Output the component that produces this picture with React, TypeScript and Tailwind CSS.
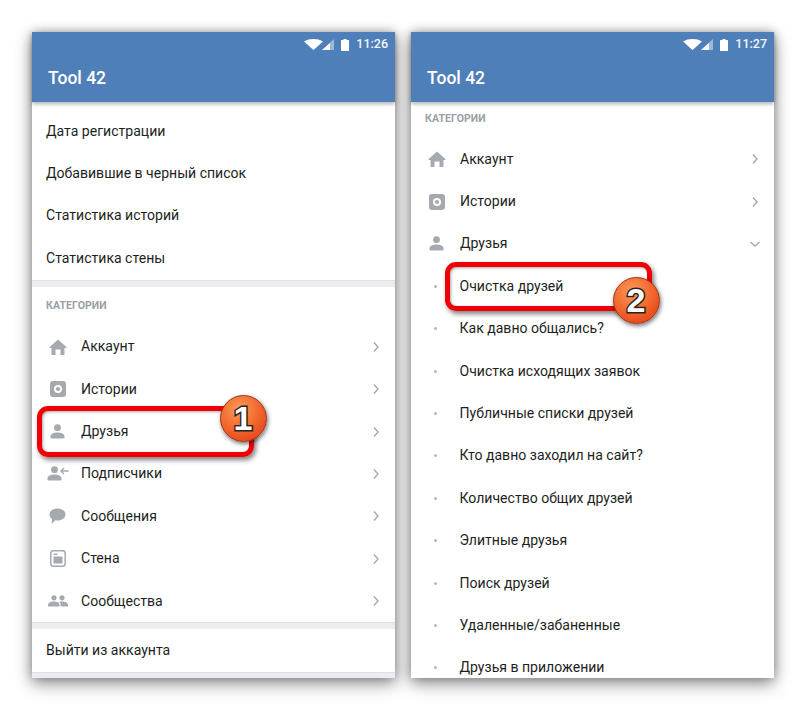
import React from "react";

const G = "#a5a9b0";

const Home = () => (
  <svg width="18" height="16" viewBox="0 0 18 16" fill={G}>
    <path d="M9 0.5 L17.6 8.2 Q18 9 17 9 H15.5 V15 Q15.5 16 14.5 16 H11.5 V10.5 H6.5 V16 H3.5 Q2.5 16 2.5 15 V9 H1 Q0 9 0.4 8.2 Z" />
  </svg>
);
const Stories = () => (
  <svg width="16" height="16" viewBox="0 0 16 16">
    <rect width="16" height="16" rx="3" fill={G} />
    <circle cx="8" cy="8" r="4" fill="#fff" />
    <circle cx="8" cy="8" r="2.1" fill={G} />
  </svg>
);
const Person = () => (
  <svg width="15" height="15" viewBox="0 0 15 15" fill={G}>
    <circle cx="7.5" cy="3.7" r="3.4" />
    <path d="M0.5 12.5 C0.5 9.8 4 8.6 7.5 8.6 C11 8.6 14.5 9.8 14.5 12.5 V13.2 Q14.5 14.5 13 14.5 H2 Q0.5 14.5 0.5 13.2 Z" />
  </svg>
);
const Followers = () => (
  <svg width="22" height="15" viewBox="0 0 22 15" fill={G}>
    <circle cx="7.5" cy="3.7" r="3.4" />
    <path d="M0.5 12.5 C0.5 9.8 4 8.6 7.5 8.6 C11 8.6 14.5 9.8 14.5 12.5 V13.2 Q14.5 14.5 13 14.5 H2 Q0.5 14.5 0.5 13.2 Z" />
    <path d="M17 2 L14 5 L17 8 M14.5 5 H21.5" fill="none" stroke={G} strokeWidth="1.3" />
  </svg>
);
const Bubble = () => (
  <svg width="17" height="16" viewBox="0 0 17 16" fill={G}>
    <path d="M8.5 0.5 C13 0.5 16.5 3 16.5 6.5 C16.5 10 13 12.5 8.5 12.5 C7.8 12.5 7 12.4 6.3 12.3 C5.2 13.6 3.6 15 2.4 15.4 C2.9 14 3.1 12.4 3 11 C1.4 9.9 0.5 8.3 0.5 6.5 C0.5 3 4 0.5 8.5 0.5 Z" />
  </svg>
);
const Wall = () => (
  <svg width="16" height="17" viewBox="0 0 16 17">
    <rect x="0.8" y="0.8" width="14.4" height="15.4" rx="2.6" fill="none" stroke={G} strokeWidth="1.5" />
    <rect x="3.5" y="3.6" width="4" height="1.5" fill={G} />
    <rect x="3.5" y="6.6" width="9" height="7" rx="0.6" fill={G} />
  </svg>
);
const Group = () => (
  <svg width="20" height="12" viewBox="0 0 20 12" fill={G}>
    <circle cx="6" cy="2.8" r="2.6" />
    <circle cx="14" cy="2.8" r="2.6" />
    <path d="M0 10 C0 7.5 3 6.5 6 6.5 C9 6.5 11.5 7.5 11.5 10 V11.5 H0 Z" />
    <path d="M12.6 11.5 V9.5 C12.6 8.4 12 7.5 11 6.9 C12 6.6 13 6.5 14 6.5 C17 6.5 20 7.5 20 10 V11.5 Z" />
  </svg>
);

const Chevron = ({ down }: { down?: boolean }) => (
  <svg width="12" height="12" viewBox="0 0 12 12" fill="none" stroke="#a5a9b0" strokeWidth="1.4">
    {down ? <path d="M1.5 4 L6 8 L10.5 4" /> : <path d="M4 1.5 L8 6 L4 10.5" />}
  </svg>
);

const Status = ({ time }: { time: string }) => (
  <div className="h-[24px] flex items-center justify-end pr-[7px] pt-[1px]">
    <svg width="19" height="11" viewBox="0 0 18 11" fill="#fff" className="mr-[-1px]" preserveAspectRatio="none">
      <path d="M0 2.5 C2.5 0.8 5.5 0 9 0 C12.5 0 15.5 0.8 18 2.5 L9 11 Z" />
    </svg>
    <svg width="12" height="11" viewBox="0 0 12 11" className="mr-[7px]">
      <path d="M12 0 V11 H0 Z" fill="#fff" fillOpacity="0.45" />
      <path d="M8 4 V11 H0.5 L0 11 Z" fill="#fff" fillOpacity="0.9" />
    </svg>
    <svg width="8" height="12" viewBox="0 0 8 12" fill="#fff" className="mr-[7px]">
      <rect x="2.5" y="0" width="3" height="1" />
      <rect x="0" y="1" width="8" height="11" rx="0.5" />
    </svg>
    <span className="text-[12.5px] font-medium text-[#f2f5f9] leading-none">{time}</span>
  </div>
);

const Header = ({ time }: { time: string }) => (
  <div className="relative z-10 h-[70px] shrink-0 bg-[#4f7fb9] shadow-[0_2px_4px_rgba(0,0,0,0.3)]">
    <Status time={time} />
    <div className="pl-[16px] pt-[10px] text-[17.5px] leading-[24px] font-medium text-white">Tool 42</div>
  </div>
);

const Row = ({ children }: { children: React.ReactNode }) => (
  <div className="h-[42.4px] flex items-center pl-[14px] text-[14.05px] text-[#1d1f22]">{children}</div>
);

const CatRow = ({ icon, label, down }: { icon: React.ReactNode; label: string; down?: boolean }) => (
  <div className="h-[42.4px] flex items-center text-[14.05px] text-[#1d1f22]">
    <div className="w-[49px] pl-[2px] flex justify-center shrink-0">{icon}</div>
    <span className="flex-1">{label}</span>
    <div className="pr-[13px] flex">
      <Chevron down={down} />
    </div>
  </div>
);

const SubRow = ({ label }: { label: string }) => (
  <div className="h-[42.4px] flex items-center text-[14.05px] text-[#1d1f22]">
    <div className="w-[48.5px] flex justify-end pr-[23px] shrink-0">
      <span className="w-[3px] h-[3px] rounded-full bg-[#b4b8be]" />
    </div>
    <span>{label}</span>
  </div>
);

const Divider = () => (
  <div className="h-[7px] bg-[#ebedf0] border-t border-[#dfe1e5] shrink-0" />
);

const CatTitle = ({ className }: { className: string }) => (
  <div className={`${className} pl-[14px] text-[10.5px] font-bold leading-[14px] text-[#9a9ea5] tracking-[0.1px]`}>
    КАТЕГОРИИ
  </div>
);

const Phone = ({ children, time }: { children: React.ReactNode; time: string }) => (
  <div className="relative w-[363px] h-[646px] bg-white flex flex-col shadow-[0_6px_16px_rgba(0,0,0,0.4),0_0_10px_rgba(0,0,0,0.28)]">
    <Header time={time} />
    <div className="flex-1 overflow-hidden">{children}</div>
  </div>
);

const Mark = ({ n, boxClass, badgeClass }: { n: string; boxClass: string; badgeClass: string }) => (
  <>
    <div
      className={`absolute z-20 border-[5px] border-[#ee0008] rounded-[11px] shadow-[2px_3px_5px_rgba(0,0,0,0.5),inset_1px_1px_3px_rgba(0,0,0,0.35)] ${boxClass}`}
    />
    <div
      className={`absolute z-30 w-[47px] h-[47px] rounded-full flex items-center justify-center border border-[#9a3312] bg-[radial-gradient(circle_at_40%_30%,#fb9a58_0%,#f2662c_50%,#dc3414_100%)] shadow-[1px_2px_4px_rgba(0,0,0,0.55)] ${badgeClass}`}
    >
      <span className="font-['Liberation_Sans',sans-serif] text-[34px] font-bold leading-none text-white [-webkit-text-stroke:3px_#2b2320] [paint-order:stroke_fill]">
        {n}
      </span>
    </div>
  </>
);

export default function App() {
  return (
    <div className="w-[806px] h-[710px] bg-white pt-[32px] pl-[32px] flex gap-[16px] font-['Roboto',sans-serif] overflow-hidden">
      <Phone time="11:26">
        <div className="pt-[8px]">
          <Row>Дата регистрации</Row>
          <Row>Добавившие в черный список</Row>
          <Row>Статистика историй</Row>
          <Row>Статистика стены</Row>
        </div>
        <Divider />
        <CatTitle className="pt-[12px] pb-[13px]" />
        <CatRow icon={<Home />} label="Аккаунт" />
        <CatRow icon={<Stories />} label="Истории" />
        <CatRow icon={<Person />} label="Друзья" />
        <CatRow icon={<Followers />} label="Подписчики" />
        <CatRow icon={<Bubble />} label="Сообщения" />
        <CatRow icon={<Wall />} label="Стена" />
        <CatRow icon={<Group />} label="Сообщества" />
        <Divider />
        <Row>Выйти из аккаунта</Row>
        <Divider />
        <Mark n="1" boxClass="left-[5px] top-[374px] w-[217px] h-[51px]" badgeClass="left-[187.5px] top-[362.5px]" />
      </Phone>
      <Phone time="11:27">
        <CatTitle className="pt-[10px] pb-[12px]" />
        <CatRow icon={<Home />} label="Аккаунт" />
        <CatRow icon={<Stories />} label="Истории" />
        <CatRow icon={<Person />} label="Друзья" down />
        <SubRow label="Очистка друзей" />
        <SubRow label="Как давно общались?" />
        <SubRow label="Очистка исходящих заявок" />
        <SubRow label="Публичные списки друзей" />
        <SubRow label="Кто давно заходил на сайт?" />
        <SubRow label="Количество общих друзей" />
        <SubRow label="Элитные друзья" />
        <SubRow label="Поиск друзей" />
        <SubRow label="Удаленные/забаненные" />
        <SubRow label="Друзья в приложении" />
        <Mark n="2" boxClass="left-[34px] top-[230px] w-[207px] h-[49px]" badgeClass="left-[201.5px] top-[244.5px]" />
      </Phone>
    </div>
  );
}
